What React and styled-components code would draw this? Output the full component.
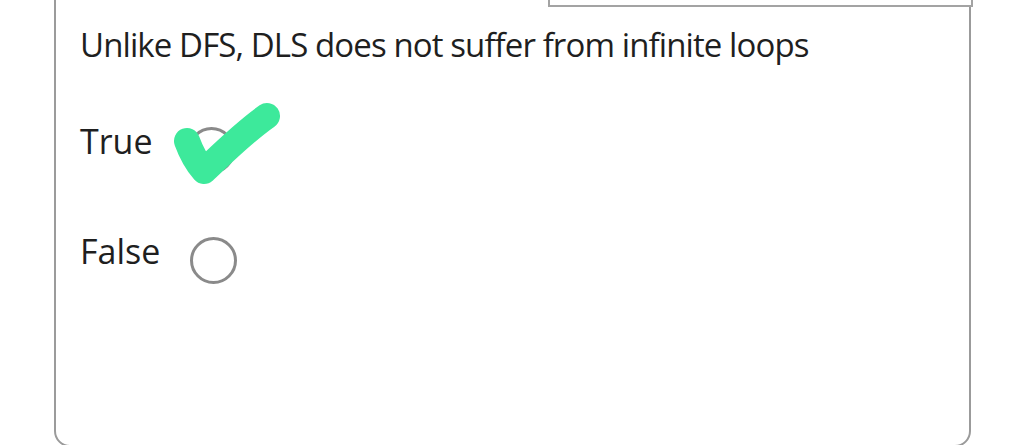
import React from 'react';
import styled, { createGlobalStyle } from 'styled-components';

const GlobalStyle = createGlobalStyle`
  html, body {
    margin: 0;
    padding: 0;
    background: #ffffff;
    overflow: hidden;
  }
  body {
    font-family: "Open Sans", "Noto Sans", sans-serif;
  }
`;

const Page = styled.div`
  width: 1024px;
  height: 445px;
  overflow: hidden;
`;

const Card = styled.div`
  box-sizing: border-box;
  width: 917px;
  height: 487px;
  margin: -40px 0 0 54px;
  border: 2px solid #9b9b9b;
  border-radius: 16px;
  display: flex;
  flex-direction: column;
`;

const CardHeader = styled.div`
  display: flex;
  justify-content: flex-end;
  margin: -2px -4px 0 0;
`;

const AnswerField = styled.div`
  box-sizing: border-box;
  width: 425px;
  height: 47px;
  border: 2px solid #a3a3a3;
  background: #fff;
`;

const Body = styled.div`
  padding: 18px 0 0 24px;
  display: flex;
  flex-direction: column;
`;

const Question = styled.p`
  margin: 0;
  font-size: 33px;
  line-height: 40px;
  color: #1f1f1f;
  letter-spacing: -0.9px;
`;

const Options = styled.div`
  display: flex;
  flex-direction: column;
  gap: 66px;
  margin-top: 54px;
`;

const Option = styled.label`
  position: relative;
  display: flex;
  align-items: center;
  gap: ${p => p.gap}px;
  height: 44px;
`;

const OptionText = styled.span`
  font-size: 34px;
  line-height: 44px;
  color: #1f1f1f;
`;

const Radio = styled.span`
  box-sizing: border-box;
  flex: none;
  width: 47px;
  height: 47px;
  margin-top: 18px;
  border: 3px solid #8a8a8a;
  border-radius: 50%;
  background: #fff;
`;

const Tick = styled.svg`
  position: absolute;
  left: 80px;
  top: -29px;
  width: 130px;
  height: 110px;
  pointer-events: none;
`;

const options = [
  { label: 'True', gap: 35, checked: true },
  { label: 'False', gap: 30, checked: false },
];

const App = () => (
  <Page>
    <GlobalStyle />
    <Card>
      <CardHeader>
        <AnswerField />
      </CardHeader>
      <Body>
        <Question>Unlike DFS, DLS does not suffer from infinite loops</Question>
        <Options>
          {options.map(opt => (
            <Option key={opt.label} gap={opt.gap}>
              <OptionText>{opt.label}</OptionText>
              <Radio />
              {opt.checked && (
                <Tick viewBox="0 0 130 110">
                  <path
                    d="M27 51 C 31 62, 37 73, 44 81 C 62 64, 84 42, 107 26"
                    fill="none"
                    stroke="#3de99b"
                    strokeWidth="26"
                    strokeLinecap="round"
                    strokeLinejoin="round"
                  />
                </Tick>
              )}
            </Option>
          ))}
        </Options>
      </Body>
    </Card>
  </Page>
);

export default App;
